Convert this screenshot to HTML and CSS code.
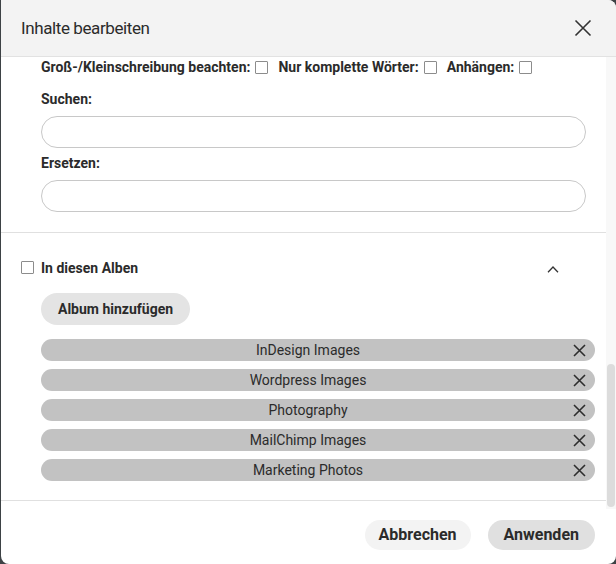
FILE: index.html
```html
<!DOCTYPE html>
<html lang="de">
<head>
<meta charset="utf-8">
<title>Inhalte bearbeiten</title>
<link rel="stylesheet" href="styles.css">
</head>
<body>
<div class="dialog">
  <div class="header">
    <span class="title">Inhalte bearbeiten</span>
    <svg class="close" width="18" height="18" viewBox="0 0 18 18"><path d="M1.5 1.5 L16.5 16.5 M16.5 1.5 L1.5 16.5" stroke="#333" stroke-width="1.6" fill="none"/></svg>
  </div>
  <div class="body">
    <div class="content">
      <div class="section replace">
        <div class="options">
          <span class="opt">Groß-/Kleinschreibung beachten:</span><span class="cb"></span>
          <span class="opt">Nur komplette Wörter:</span><span class="cb"></span>
          <span class="opt">Anhängen:</span><span class="cb"></span>
        </div>
        <div class="label l-first">Suchen:</div>
        <div class="input"></div>
        <div class="label">Ersetzen:</div>
        <div class="input"></div>
      </div>
      <div class="section albums">
        <div class="albums-head">
          <span class="cb cb-head"></span>
          <span class="opt">In diesen Alben</span>
          <svg class="chevron" width="12" height="7" viewBox="0 0 12 7"><path d="M1 6.2 L6 1 L11 6.2" stroke="#333" stroke-width="1.3" fill="none"/></svg>
        </div>
        <div class="add-btn">Album hinzufügen</div>
        <div class="tags">
          <div class="tag"><span>InDesign Images</span><svg class="tag-x" width="13" height="13" viewBox="0 0 13 13"><path d="M1 1 L12 12 M12 1 L1 12" stroke="#2e2e2e" stroke-width="1.6" fill="none"/></svg></div>
          <div class="tag"><span>Wordpress Images</span><svg class="tag-x" width="13" height="13" viewBox="0 0 13 13"><path d="M1 1 L12 12 M12 1 L1 12" stroke="#2e2e2e" stroke-width="1.6" fill="none"/></svg></div>
          <div class="tag"><span>Photography</span><svg class="tag-x" width="13" height="13" viewBox="0 0 13 13"><path d="M1 1 L12 12 M12 1 L1 12" stroke="#2e2e2e" stroke-width="1.6" fill="none"/></svg></div>
          <div class="tag"><span>MailChimp Images</span><svg class="tag-x" width="13" height="13" viewBox="0 0 13 13"><path d="M1 1 L12 12 M12 1 L1 12" stroke="#2e2e2e" stroke-width="1.6" fill="none"/></svg></div>
          <div class="tag"><span>Marketing Photos</span><svg class="tag-x" width="13" height="13" viewBox="0 0 13 13"><path d="M1 1 L12 12 M12 1 L1 12" stroke="#2e2e2e" stroke-width="1.6" fill="none"/></svg></div>
        </div>
      </div>
    </div>
    <div class="scrollbar"><div class="thumb"></div></div>
  </div>
  <div class="footer">
    <div class="btn btn-cancel">Abbrechen</div>
    <div class="btn btn-apply">Anwenden</div>
  </div>
</div>
</body>
</html>
```
FILE: styles.css
```css
* { box-sizing: border-box; }
html, body { margin: 0; padding: 0; }
body {
  background: #3d4245;
  width: 616px;
  height: 564px;
  overflow: hidden;
  font-family: Roboto, "Liberation Sans", sans-serif;
  color: #2b2b2b;
}
.dialog {
  margin-left: 1px;
  width: 615px;
  height: 564px;
  background: #fff;
  border-radius: 0 8px 8px 8px;
  overflow: hidden;
  display: flex;
  flex-direction: column;
}
.header {
  height: 57px;
  flex: none;
  background: #f3f3f3;
  border-bottom: 1px solid #e2e2e2;
  display: flex;
  align-items: center;
  justify-content: space-between;
  padding: 0 24px 0 20px;
}
.title {
  font-size: 17px;
  letter-spacing: -0.4px;
  color: #2b2b2b;
}
.close { display: block; }
.body {
  height: 452px;
  flex: none;
  display: flex;
}
.content { flex: 1; }
.section { border-bottom: 1px solid #e0e0e0; }
.replace { padding: 0 20px 20px 40px; }
.options {
  display: flex;
  align-items: center;
  height: 20px;
}
.opt {
  font-weight: 700;
  font-size: 14px;
  line-height: 20px;
}
.cb {
  width: 13px;
  height: 13px;
  border: 1px solid #8c8c8c;
  border-radius: 1px;
  background: #fff;
  margin: 0 10px 0 5px;
  flex: none;
}
.label {
  font-weight: 700;
  font-size: 14px;
  line-height: 20px;
  margin-top: 5px;
}
.l-first { margin-top: 12px; }
.input {
  height: 32px;
  border: 1px solid #c8c8c8;
  border-radius: 16px;
  margin-top: 7px;
  background: #fff;
}
.albums { padding: 25px 11px 19px 40px; }
.albums-head {
  display: flex;
  align-items: center;
  height: 20px;
  margin-left: -20px;
}
.cb-head { margin: 0 7px 1px 0; }
.chevron { margin-left: auto; margin-right: 36px; margin-top: 2px; }
.add-btn {
  display: inline-block;
  margin-top: 15px;
  height: 32px;
  line-height: 32px;
  padding: 0 17px;
  background: #e4e4e4;
  border-radius: 16px;
  font-weight: 700;
  font-size: 14px;
}
.tags {
  margin-top: 14px;
  display: flex;
  flex-direction: column;
  gap: 8px;
}
.tag {
  height: 22px;
  background: #c2c2c2;
  border-radius: 11px;
  display: flex;
  align-items: center;
  justify-content: center;
  padding-right: 20px;
  position: relative;
  font-size: 14px;
  color: #2b2b2b;
}
.tag-x { position: absolute; right: 9px; top: 4.5px; }
.scrollbar {
  width: 10px;
  flex: none;
  background: #f8f8f8;
  padding: 0 1px;
  display: flex;
  flex-direction: column;
  justify-content: flex-end;
}
.thumb {
  height: 143px;
  background: #dcdcdc;
  border-radius: 4px;
  margin-bottom: 2px;
}
.footer {
  flex: 1;
  display: flex;
  justify-content: flex-end;
  align-items: flex-start;
  gap: 17px;
  padding: 11px 21px 0 0;
}
.btn {
  height: 30px;
  line-height: 30px;
  border-radius: 15px;
  font-weight: 700;
  font-size: 16px;
  padding: 0 16px;
}
.btn-cancel { background: #f3f3f3; padding: 0 14px; }
.btn-apply { background: #e0e0e0; }
```
